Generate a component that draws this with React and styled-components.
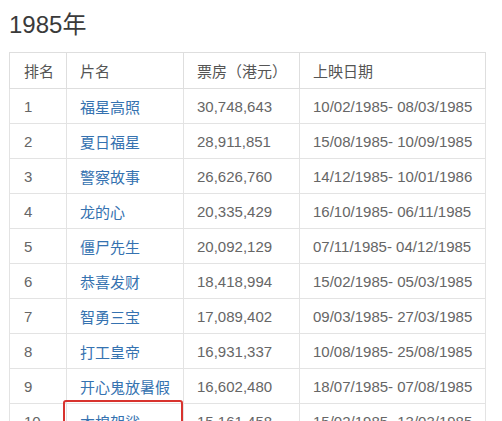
import React from "react";
import styled, { createGlobalStyle } from "styled-components";

const Global = createGlobalStyle`
  html, body { margin: 0; padding: 0; background: #fff; }
  body { font-family: "Liberation Sans", "Noto Sans CJK SC", sans-serif; }
`;

const Page = styled.div`
  padding: 10px 9px 0 9px;
  width: 475px;
`;

const Title = styled.h2`
  margin: 0 0 12px 0;
  font-size: 24px;
  line-height: 30px;
  font-weight: normal;
  color: #3a3a3a;
`;

const Table = styled.table`
  border-collapse: collapse;
  table-layout: fixed;
  width: 476px;
  font-size: 15px;
  color: #666;
`;

const Th = styled.th`
  height: 34px;
  padding: 0 0 1px ${(p) => p.$pl || 13}px;
  border: 1px solid #dedede;
  text-align: left;
  font-weight: normal;
  color: #555;
  white-space: nowrap;
`;

const Td = styled.td`
  position: relative;
  height: 34px;
  padding: 0 0 0 ${(p) => p.$pl || 13}px;
  border: 1px solid #e3e3e3;
  white-space: nowrap;
  color: #666;
`;

const Link = styled.a`
  color: #3572b0;
  text-decoration: none;
  cursor: pointer;
`;

const Highlight = styled.span`
  position: absolute;
  left: -4px;
  top: -4px;
  width: 120px;
  height: 40px;
  border: 2.5px solid #d8332e;
  border-radius: 3px;
  box-sizing: border-box;
  pointer-events: none;
`;

const rows = [
  ["1", "福星高照", "30,748,643", "10/02/1985- 08/03/1985"],
  ["2", "夏日福星", "28,911,851", "15/08/1985- 10/09/1985"],
  ["3", "警察故事", "26,626,760", "14/12/1985- 10/01/1986"],
  ["4", "龙的心", "20,335,429", "16/10/1985- 06/11/1985"],
  ["5", "僵尸先生", "20,092,129", "07/11/1985- 04/12/1985"],
  ["6", "恭喜发财", "18,418,994", "15/02/1985- 05/03/1985"],
  ["7", "智勇三宝", "17,089,402", "09/03/1985- 27/03/1985"],
  ["8", "打工皇帝", "16,931,337", "10/08/1985- 25/08/1985"],
  ["9", "开心鬼放暑假", "16,602,480", "18/07/1985- 07/08/1985"],
  ["10", "木棉袈裟", "15,161,458", "15/02/1985- 13/03/1985"],
];

export default function App() {
  return (
    <Page>
      <Global />
      <Title>1985年</Title>
      <Table>
        <colgroup>
          <col style={{ width: 57 }} />
          <col style={{ width: 117 }} />
          <col style={{ width: 116 }} />
          <col style={{ width: 186 }} />
        </colgroup>
        <thead>
          <tr>
            <Th $pl={14}>排名</Th>
            <Th>片名</Th>
            <Th>票房（港元）</Th>
            <Th>上映日期</Th>
          </tr>
        </thead>
        <tbody>
          {rows.map((r) => (
            <tr key={r[0]}>
              <Td $pl={14}>{r[0]}</Td>
              <Td>
                <Link>{r[1]}</Link>
                {r[0] === "10" && <Highlight />}
              </Td>
              <Td>{r[2]}</Td>
              <Td>{r[3]}</Td>
            </tr>
          ))}
        </tbody>
      </Table>
    </Page>
  );
}
